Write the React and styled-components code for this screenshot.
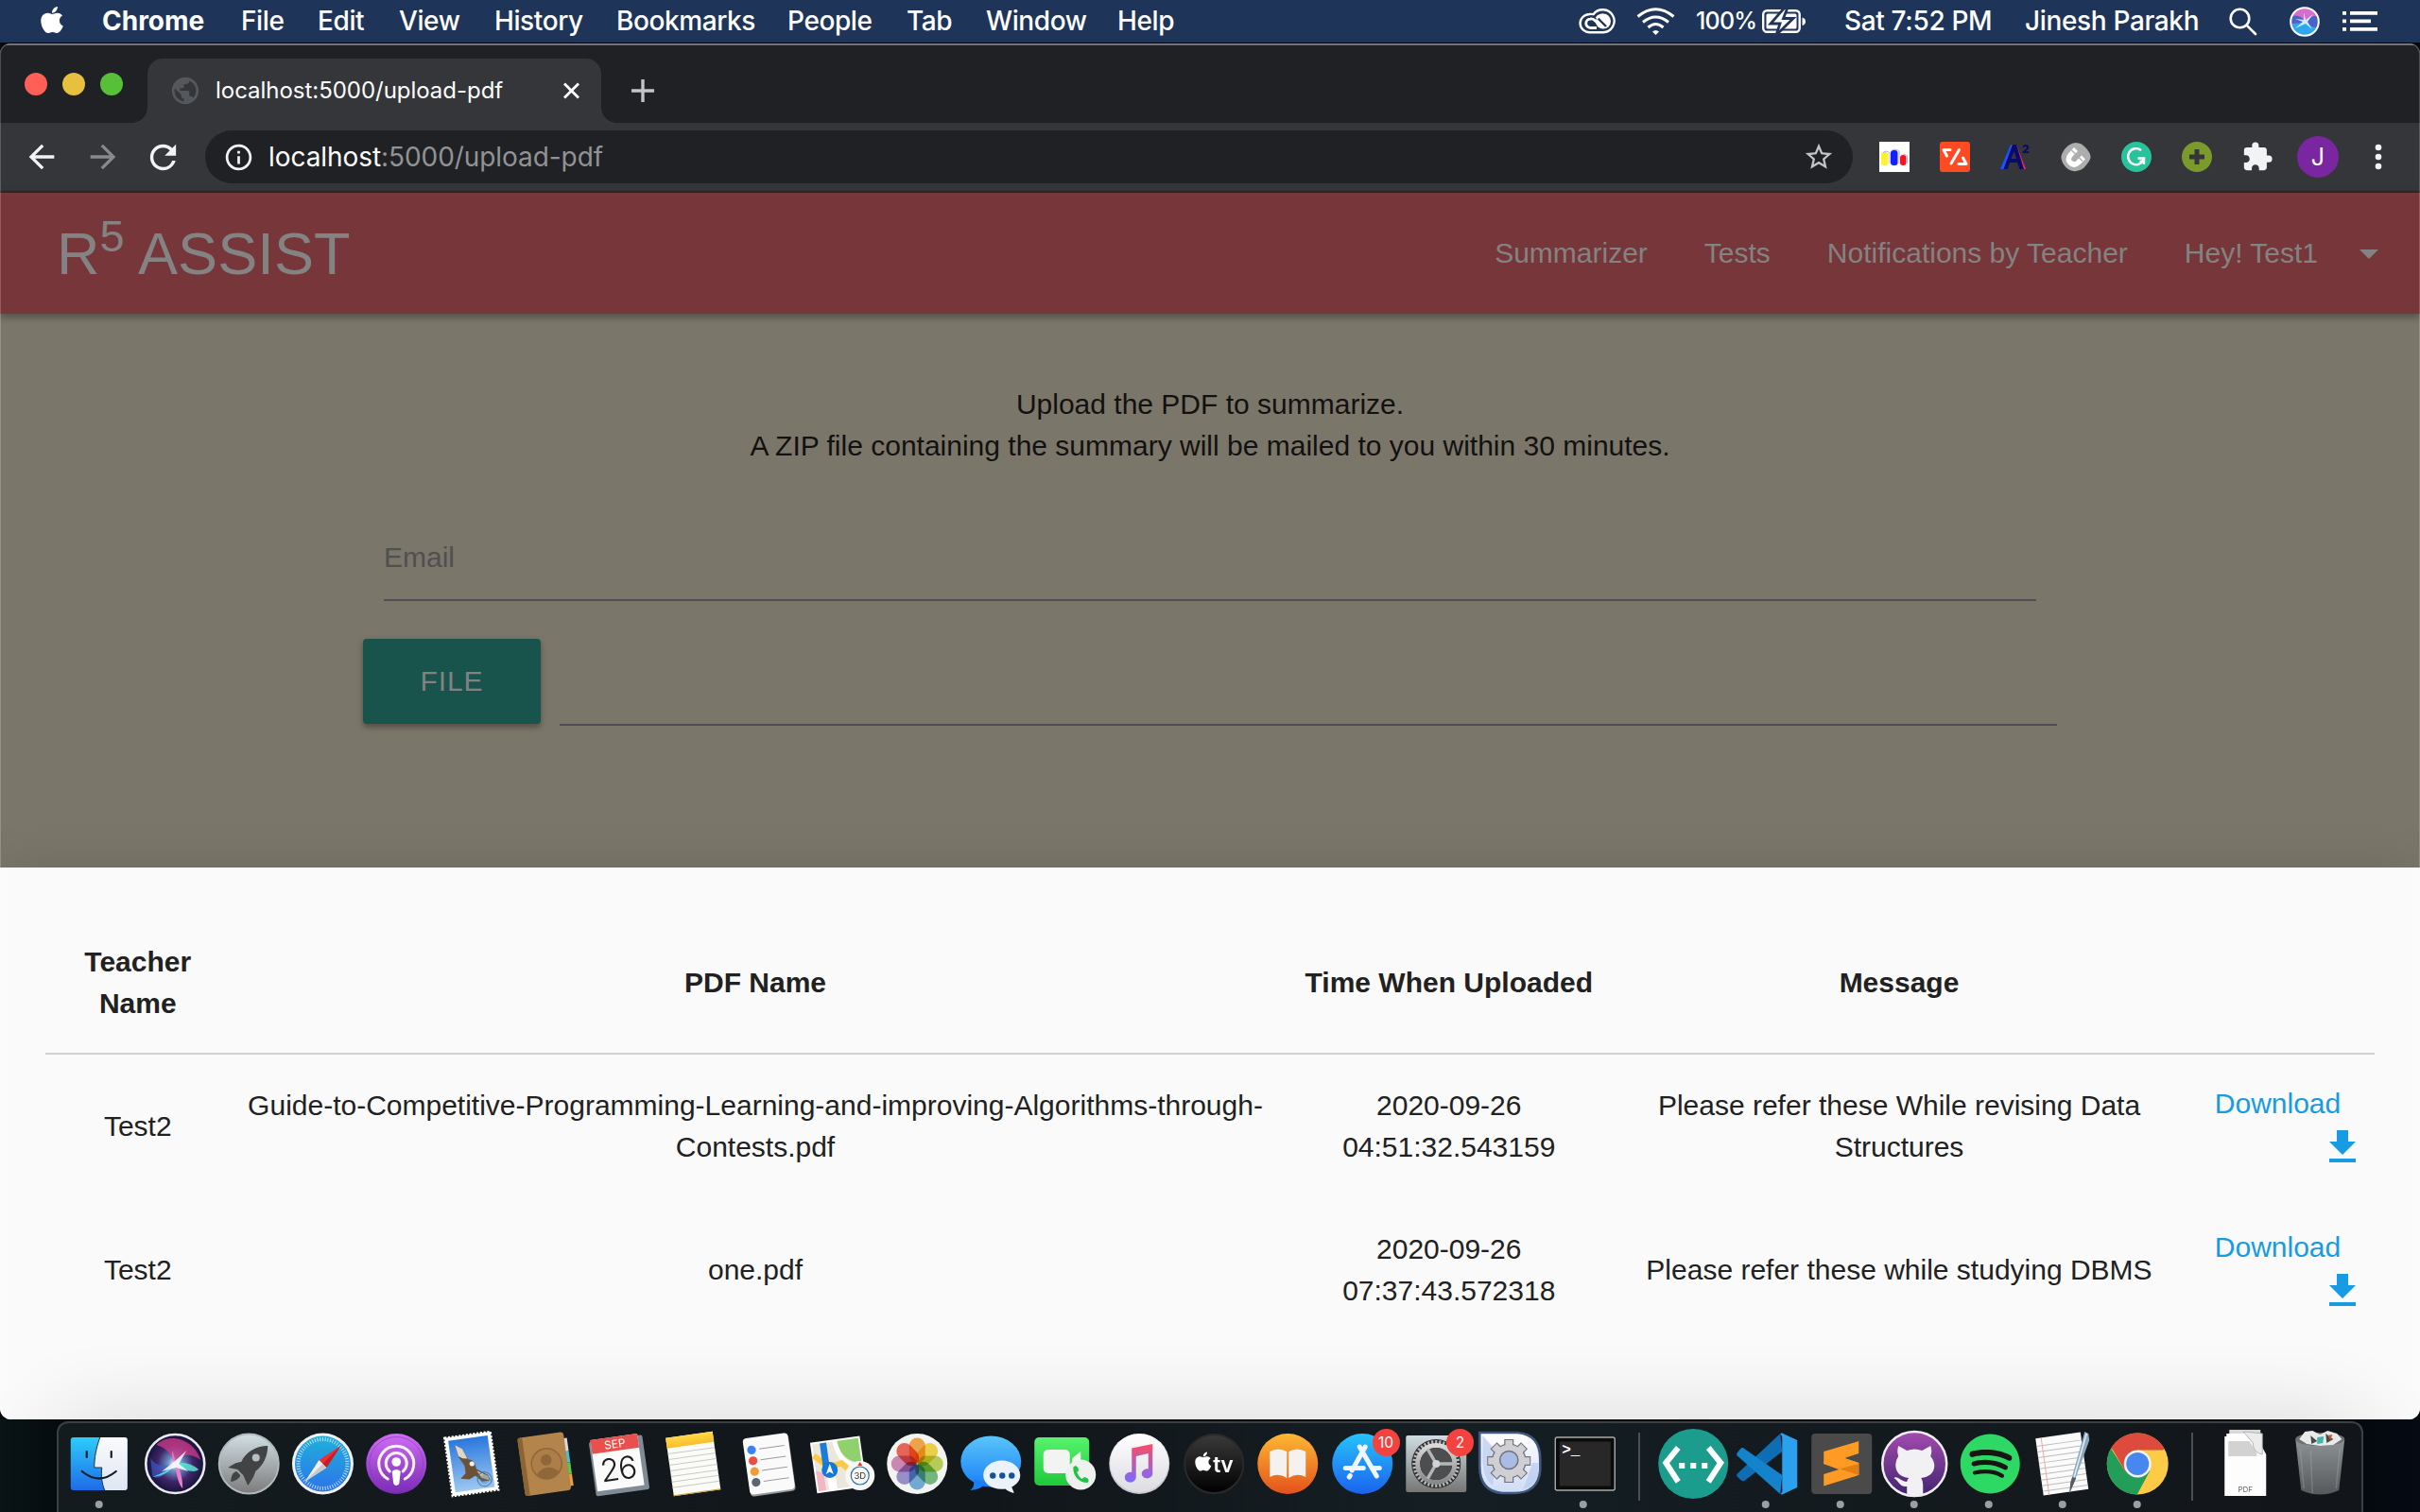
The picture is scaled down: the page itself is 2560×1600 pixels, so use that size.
import React from "react";
import styled, { createGlobalStyle } from "styled-components";
import { FaApple, FaSpotify } from "react-icons/fa";
import { MdArrowBack, MdArrowForward, MdRefresh, MdInfoOutline, MdStarBorder, MdExtension, MdPublic, MdArrowDropDown } from "react-icons/md";

const ui = `Inter, "Liberation Sans", sans-serif`;
const page = `"Liberation Sans", Arial, sans-serif`;

const Global = createGlobalStyle`
  *, *::before, *::after { box-sizing: border-box; }
  html, body { margin: 0; background: #000; }
  body { width: 2560px; height: 1600px; overflow: hidden; font-family: ${page}; }
  svg { display: block; flex: none; }
`;

const Desktop = styled.div`
  width: 2560px;
  height: 1600px;
  display: flex;
  flex-direction: column;
  background: #05090c;
  overflow: hidden;
`;

/* ---------- menu bar ---------- */
const MenuBar = styled.header`
  height: 45px;
  flex: none;
  display: flex;
  justify-content: space-between;
  background: #1f3459;
  color: #fff;
  font: 500 28px/45px ${ui};
`;
const MenuLeft = styled.nav`
  display: grid;
  grid-template-columns: 69px 147px 81px 86px 101px 129px 181px 126px 84px 139px 100px;
  padding-left: 39px;
  align-items: center;
`;
const MenuRight = styled.div`
  display: grid;
  grid-template-columns: 61px 63px 70px 87px 191px 216px 64px 56px 82px;
  align-items: center;
`;
const AppleMark = styled(FaApple)`
  width: 32px;
  height: 32px;
  margin-top: -4px;
`;
const MenuItem = styled.span`
  white-space: nowrap;
  font-weight: ${(p) => (p.$bold ? 700 : 500)};
  letter-spacing: ${(p) => p.$track || 0}px;
  font-size: ${(p) => p.$size || 28}px;
`;

/* ---------- browser window ---------- */
const Window = styled.main`
  position: relative;
  height: 1457px;
  flex: none;
  display: flex;
  flex-direction: column;
  border-top: 1px solid #000;
  border-radius: 12px;
  overflow: hidden;
  background: #fafafa;
  &::after {
    content: "";
    position: absolute;
    inset: 0;
    border-radius: 11px;
    box-shadow: inset 0 0 0 1px rgba(255, 255, 255, 0.2);
    pointer-events: none;
  }
`;
const TabStrip = styled.div`
  height: 84px;
  flex: none;
  display: flex;
  background: #202124;
  border-top: 2px solid #66686a;
  padding-left: 26px;
`;
const Lights = styled.div`
  width: 130px;
  display: flex;
  align-items: center;
  gap: 16px;
`;
const Light = styled.i`
  width: 24px;
  height: 24px;
  border-radius: 50%;
  background: ${(p) => p.$color};
`;
const Tab = styled.div`
  position: relative;
  width: 480px;
  height: 68px;
  align-self: flex-end;
  display: flex;
  align-items: center;
  padding: 0 20px 0 23px;
  border-radius: 16px 16px 0 0;
  background: #35363a;
  color: #fff;
  font: 400 24px/30px ${ui};
  &::before, &::after {
    content: "";
    position: absolute;
    bottom: 0;
    width: 16px;
    height: 16px;
  }
  &::before { left: -16px; background: radial-gradient(circle at 0 0, transparent 15.5px, #35363a 16px); }
  &::after { right: -16px; background: radial-gradient(circle at 100% 0, transparent 15.5px, #35363a 16px); }
`;
const TabTitle = styled.span`
  flex: 1;
  margin-left: 15px;
  letter-spacing: -0.03px;
`;
const NewTab = styled.div`
  margin: 14px 0 0 31px;
  height: 68px;
  display: flex;
  align-items: center;
`;
const Toolbar = styled.div`
  height: 74px;
  flex: none;
  display: grid;
  grid-template-columns: 217px 1743px 1fr;
  align-items: center;
  background: #35363a;
  border-bottom: 2px solid #28292b;
  color: #f1f3f4;
`;
const NavButtons = styled.div`
  display: grid;
  grid-template-columns: 65px 65px 62px;
  justify-items: center;
  padding-left: 11px;
`;
const Omnibox = styled.div`
  height: 56px;
  display: flex;
  align-items: center;
  padding: 0 19px;
  border-radius: 28px;
  background: #202124;
  font: 400 28px/40px ${ui};
`;
const Url = styled.span`
  flex: 1;
  margin-left: 15px;
  color: #919395;
  letter-spacing: -0.07px;
  b { font-weight: 400; color: #fff; }
`;
const Extensions = styled.div`
  display: grid;
  grid-template-columns: repeat(9, 64px);
  justify-items: center;
  align-items: center;
  padding-left: 12px;
`;
const Avatar = styled.span`
  width: 44px;
  height: 44px;
  border-radius: 50%;
  background: #7a26a0;
  color: #fff;
  text-align: center;
  font: 400 25px/44px ${ui};
`;

/* ---------- site ---------- */
const NavBar = styled.nav`
  position: relative;
  height: 128px;
  flex: none;
  display: flex;
  justify-content: space-between;
  align-items: center;
  padding: 0 36px 0 60px;
  background: #773639;
  color: #838383;
  box-shadow: 0 4px 6px rgba(0, 0, 0, 0.22), 0 2px 10px rgba(0, 0, 0, 0.12);
`;
const Brand = styled.a`
  font-size: 63px;
  line-height: 127px;
  letter-spacing: 0.1px;
  white-space: pre;
  sup {
    position: relative;
    top: -24px;
    font-size: 47px;
    line-height: 0;
    vertical-align: baseline;
  }
`;
const Links = styled.div`
  display: flex;
  align-items: center;
  font-size: 30px;
`;
const Link = styled.a`
  padding: 0 30px;
`;
const Caret = styled(MdArrowDropDown)`
  margin-right: -6px;
  width: 48px;
  height: 48px;
`;
const UploadArea = styled.section`
  height: 586px;
  flex: none;
  padding-top: 74px;
  background: #7b766a;
  color: #121110;
  font-size: 30px;
  line-height: 44px;
`;
const Intro = styled.p`
  margin: 0;
  text-align: center;
`;
const Form = styled.form`
  width: 1792px;
  margin: 74px auto 0;
`;
const EmailField = styled.div`
  margin: 0 22px;
  height: 68px;
  color: #504f51;
  border-bottom: 2px solid #504e53;
`;
const FileRow = styled.div`
  display: flex;
  gap: 20px;
  height: 92px;
  margin-top: 40px;
`;
const FileButton = styled.span`
  width: 188px;
  height: 90px;
  border-radius: 4px;
  background: #18534c;
  color: #828282;
  text-align: center;
  line-height: 90px;
  letter-spacing: 0.9px;
  box-shadow: 0 4px 5px rgba(0, 0, 0, 0.22), 0 2px 8px rgba(0, 0, 0, 0.14);
`;
const FilePath = styled.div`
  flex: 1;
  border-bottom: 2px solid #504e53;
`;

/* ---------- modal table ---------- */
const Modal = styled.section`
  position: relative;
  flex: 1;
  padding: 48px;
  background: #fafafa;
  color: #212121;
  font-size: 30px;
  line-height: 44px;
  box-shadow: 0 0 50px rgba(0, 0, 0, 0.1);
`;
const Row = styled.div`
  display: grid;
  grid-template-columns: 195.500px 1111px 356.500px 596px 204px;
  height: ${(p) => (p.$head ? 150 : 152)}px;
  align-items: center;
  text-align: center;
  font-weight: ${(p) => (p.$head ? 700 : 400)};
  border-bottom: ${(p) => (p.$head ? "2px solid #d1d1d1" : "0")};
`;
const Cell = styled.div`
  padding: 0 10px;
  white-space: pre-line;
`;
const Download = styled.a`
  display: flex;
  flex-direction: column;
  align-items: center;
  padding: 0 9px 0 10px;
  margin-top: -1px;
  color: #179be2;
  svg { align-self: flex-end; }
`;

/* ---------- dock ---------- */
const DockArea = styled.footer`
  position: relative;
  z-index: 1;
  flex: none;
  height: 98px;
  padding: 2px 60px 0;
  background: linear-gradient(90deg, #0a1517, #04070b 4%, #05080d 96%, #060b14);
`;
const Dock = styled.div`
  height: 96px;
  display: flex;
  padding-left: 5px;
  background: linear-gradient(90deg, #141b1e, #11161a 40%, #141e23 60%, #13181c 90%, #121519);
  border: 2px solid #3c4043;
  border-bottom: 0;
  border-radius: 12px 12px 0 0;
  box-shadow: 0 0 90px rgba(0, 0, 0, 0.14);
`;
const Slot = styled.div`
  position: relative;
  width: 78.5px;
  height: 94px;
  flex: none;
`;
const Divider = styled.i`
  width: 2px;
  height: 72px;
  margin: 10px 17px 0;
  background: #4b5054;
`;
const Badge = styled.span`
  position: absolute;
  left: ${(p) => p.$left}px;
  top: 5.5px;
  width: 29px;
  height: 29px;
  border-radius: 50%;
  background: #f4423f;
  color: #fff;
  text-align: center;
  font: 400 15.5px/29px ${ui};
`;

function AppSlot({ children, running, badge, badgeLeft }) {
  return (
    <Slot>
      <svg width="78.5" height="94" viewBox="-39.25 -43 78.5 94" overflow="visible">
        {children}
        {running && <circle cx="-1.500" cy="43" r="4" fill="#9a9fa4" />}
      </svg>
      {badge && <Badge $left={badgeLeft}>{badge}</Badge>}
    </Slot>
  );
}

const HiddenDefs = styled.svg`
  position: absolute;
`;

const Defs = () => (
  <HiddenDefs width="0" height="0">
    <defs>
      {[
        ["finderL", "#2ccdfb", "#1f6be8"], ["finderR", "#fbfbfd", "#dde6f2"], ["rocket", "#d2dfe4", "#7c7c7c"],
        ["pod", "#cf6df5", "#7a2bb4"], ["sky", "#2a78dc", "#9cc8f2"], ["note", "#ffd84a", "#f9bf26"],
        ["msg", "#5ac5fa", "#1a80f6"], ["ft", "#57f36c", "#1fc93b"], ["book", "#fdb833", "#e4521b"],
        ["store", "#26c3fb", "#1b62ee"], ["white", "#ffffff", "#dcdce2"], ["tv", "#3a3a3a", "#000000"],
        ["prefs", "#cfdde2", "#767676"], ["gh", "#a34bb0", "#41256f"], ["trash", "#8d9295", "#55595c"],
        ["music", "#fb4c64", "#7a6bff"], ["saf", "#1fb0dc", "#2c74e8"], ["gearblue", "#ffffff", "#cfdcf5"], ["steel", "#dadada", "#86888a"],
      ].map(([id, a, b]) => (
        <linearGradient key={id} id={id} x1="0" y1="0" x2="0" y2="1">
          <stop offset="0" stopColor={a} />
          <stop offset="1" stopColor={b} />
        </linearGradient>
      ))}
      <radialGradient id="siri" cx="0.5" cy="0.5" r="0.5">
        <stop offset="0" stopColor="#e8f6ff" />
        <stop offset="0.25" stopColor="#6a8fc8" />
        <stop offset="0.6" stopColor="#3f2668" />
        <stop offset="1" stopColor="#141238" />
      </radialGradient>
    </defs>
  </HiddenDefs>
);

const teeth = (n, r1, r2) =>
  Array.from({ length: n }, (_, i) => {
    const a = (i * 2 * Math.PI) / n;
    return `M${(Math.cos(a) * r1).toFixed(2)} ${(Math.sin(a) * r1).toFixed(2)}L${(Math.cos(a) * r2).toFixed(2)} ${(Math.sin(a) * r2).toFixed(2)}`;
  }).join("");

const Finder = () => (
  <g transform="translate(-1.5 0)">
    <rect x="-30" y="-28" width="60" height="56" rx="3" fill="url(#finderL)" />
    <path d="M1-28C-3-17-5-6-5 4H3C2 13 3 21 6 28H27a3 3 0 0 0 3-3V-25a3 3 0 0 0-3-3Z" fill="url(#finderR)" />
    <path d="M1-28C-3-17-5-6-5 4H3C2 13 3 21 6 28" fill="none" stroke="#1d3350" strokeWidth="1" />
    <path d="M-13-13v6M13-13v6M-18 8Q0 23 18 8" fill="none" stroke="#111f2b" strokeWidth="2.2" strokeLinecap="round" />
  </g>
);
const Siri = () => (
  <g>
    <circle r="31" fill="url(#siri)" stroke="#e9eaf2" strokeWidth="2.6" />
    <path d="M-20-20C-6-34 20-26 27-4C14-14 4-8 0-1C-4-12-12-18-20-20Z" fill="#d23b88" opacity="0.75" />
    <path d="M-26-6C-20 4-8 3 0 0C-10 12-18 18-24 13Z" fill="#3f63d6" opacity="0.6" />
    <path d="M-24 14Q-8 8 0 0Q12-4 25 6Q18 12 0 0Q-6 12-24 14Z" fill="#57e6d6" opacity="0.85" />
    <path d="M-3-14Q0-4 2 0Q8 12 8 26Q3 22 0 2Q-4-6-3-14Z" fill="#f07ac8" />
    <path d="M-14 8L1-4L12-14L4 0L14 8L1 4Z" fill="#fff" opacity="0.85" />
  </g>
);
const Launchpad = () => (
  <g>
    <circle r="31.5" fill="url(#rocket)" stroke="#aebabf" strokeWidth="2" />
    <path d="M20-19C8-19-3-13-8-2C-13-2-19 2-22 4L-12 6L-6 12L-1 23C4 16 6 12 7 8C15 2 20-8 20-19Z" fill="#414345" />
    <path d="M-13 8C-17 9-19 13-19 19C-14 18-9 15-9 12Z" fill="#414345" />
    <circle cx="7.5" cy="-6.5" r="4" fill="#b6bfc3" />
  </g>
);
const Safari = () => (
  <g transform="translate(-0.8 0)">
    <circle r="32.5" fill="#f2f2f2" />
    <circle r="29.5" fill="url(#saf)" />
    <path d={teeth(60, 24, 28)} stroke="#d9edfb" strokeWidth="0.9" />
    <path d="M19-19L4 4L-4-4Z" fill="#ee2e33" />
    <path d="M-19 19L4 4L-4-4Z" fill="#f1efec" />
    <path d="M19-19L4 4L0 0Z" fill="#c21f26" />
    <path d="M-19 19L4 4L0 0Z" fill="#c9c9c9" />
  </g>
);
const Podcasts = () => (
  <g transform="translate(-1 0)">
    <circle r="32" fill="url(#pod)" />
    <circle r="28.5" fill="none" stroke="#8a35c4" strokeWidth="1" opacity="0.6" />
    <g fill="none" stroke="#fbf3ff" strokeWidth="3" strokeLinecap="round">
      <path d="M-9 16A18.5 18.5 0 1 1 9 16" />
      <path d="M-7 8A11 11 0 1 1 7 8" />
    </g>
    <circle cy="-2" r="4.8" fill="#fff" />
    <path d="M-4.5 8Q0 4 4.5 8L3 21Q0 25-3 21Z" fill="#fff" />
  </g>
);
const Mail = () => (
  <g transform="rotate(-8)">
    <rect x="-25" y="-31" width="49" height="62" fill="#fff" stroke="#fff" strokeWidth="2.4" strokeDasharray="2.2 1.6" />
    <rect x="-21.5" y="-27.5" width="42" height="55" fill="url(#sky)" />
    <path d="M-15-22L-8-17L-3-5Q1-5 3 0L4 6L15 14L17 20L8 20L2 13L-5 16L-14 14L-8 9L-8 1L-13-9Z" fill="#6b5139" />
    <path d="M-15-22L-8-17L-4-6L-9-7L-13-10Z" fill="#ddd6ca" />
    <path d="M4 8L15 15L16 20L8 16Z" fill="#d3c29c" />
    <circle cx="0" cy="0" r="2.6" fill="#f2efe8" />
    <circle cx="11" cy="18" r="7.5" fill="none" stroke="#4778a8" strokeWidth="1" />
    <circle cx="11" cy="18" r="5" fill="#4778a8" opacity="0.35" />
  </g>
);
const Contacts = () => (
  <g transform="rotate(-8)">
    <rect x="17" y="-24" width="9" height="14" fill="#d8dad8" />
    <rect x="17" y="-10" width="9" height="12" fill="#49c2cf" />
    <rect x="17" y="2" width="9" height="12" fill="#55c950" />
    <rect x="17" y="14" width="9" height="13" fill="#efa12e" />
    <rect x="-26" y="-31" width="49" height="62" rx="3" fill="#b3854d" />
    <path d="M-26-29v58a2 2 0 0 0 2 2h3v-62h-3a2 2 0 0 0-2 2Z" fill="#8a6434" />
    <circle cx="1" r="16" fill="#ad7f48" stroke="#8f673a" strokeWidth="1.5" />
    <circle cx="1" cy="-4" r="5.8" fill="#8f673a" />
    <path d="M-11 10Q1-2 13 10Q1 22-11 10Z" fill="#8f673a" />
  </g>
);
const Calendar = () => (
  <g transform="translate(-2 0) rotate(-8)">
    <rect x="-28" y="-27" width="57" height="58" rx="2" fill="#7f8c96" />
    <rect x="-26" y="-29" width="50" height="55" fill="#fbfbfb" />
    <rect x="-26" y="-29" width="50" height="15" fill="#e9504d" />
    <text x="-1" y="-17" textAnchor="middle" fill="#fff" fontFamily="Inter" fontSize="12">SEP</text>
    <text x="-1" y="17" textAnchor="middle" fill="#1c1c1c" fontFamily="Inter" fontWeight="300" fontSize="33" letterSpacing="-1">26</text>
  </g>
);
const Notes = () => (
  <g transform="translate(-1 0) rotate(-8)">
    <rect x="-25" y="-31" width="50" height="62" fill="#fbfbf8" />
    <rect x="-25" y="-31" width="50" height="11" fill="url(#note)" />
    <path d="M-25-14h50M-25-8h50M-25-2h50M-25 4h50M-25 10h50M-25 16h50M-25 22h50" stroke="#c9cac8" strokeWidth="1" />
    <path d="M-25 30.5h50" stroke="#c89a2a" strokeWidth="1" />
  </g>
);
const Reminders = () => (
  <g transform="rotate(-8)">
    <rect x="-23.5" y="-29" width="48" height="61" rx="4" fill="#9a9a9a" />
    <rect x="-24" y="-30" width="48" height="60" rx="4" fill="#fafafa" />
    {["#3b82f6", "#ee4d43", "#f29a38", "#5b6470"].map((c, i) => (
      <g key={c}>
        <circle cx="-16" cy={-17 + i * 11.5} r="4.6" fill={c} />
        <path d={`M-8 ${-17 + i * 11.5}h27`} stroke="#9b9b9b" strokeWidth="1" />
      </g>
    ))}
  </g>
);
const Maps = () => (
  <g>
    <g transform="translate(-5 0) rotate(-8)">
      <rect x="-26" y="-26" width="53" height="54" fill="#fff" />
      <rect x="-24" y="-24" width="49" height="50" fill="#ece7dc" />
      <path d="M2-24H25V2C10 0 4-10 2-24Z" fill="#8fd16c" />
      <path d="M0-24Q2 4 25 6" fill="none" stroke="#fff" strokeWidth="5" />
      <path d="M-24-12L-10 2L4 0L20 18" fill="none" stroke="#fbc943" strokeWidth="6" />
      <path d="M-16-24h7v30h-7Z" fill="#1c7cd8" />
      <path d="M-24 4l8 4v18h-8Z" fill="#f5b6c4" />
      <path d="M-13 12h9v14h-9Z" fill="#fff" />
    </g>
    <circle cx="-13.5" cy="6.5" r="8.5" fill="#1577d8" />
    <path d="M-13.5 0L-9.5 11L-13.5 8.5L-17.5 11Z" fill="#fff" />
    <circle cx="18.5" cy="12.5" r="15.5" fill="#f7f7f6" />
    <circle cx="18.5" cy="12.5" r="9.5" fill="none" stroke="#2f6d94" strokeWidth="1.2" />
    <path d="M18.5-2l2.5 4h-5Z" fill="#e13a32" />
    <text x="18.5" y="16" textAnchor="middle" fontFamily="Inter" fontSize="9.5" fill="#333">3D</text>
  </g>
);
const Multiply = styled.g`
  rect { mix-blend-mode: multiply; }
`;
const Photos = () => (
  <Multiply>
    <circle r="32" fill="#f3f3f2" />
    {["#f9a23a", "#f4d63a", "#b7d24b", "#6cb878", "#67a9dc", "#9689cf", "#cf82b4", "#ef5b4c"].map((c, i) => (
      <rect key={c} x="-8.5" y="-27.5" width="17" height="27" rx="8.5" fill={c} opacity="0.9" transform={`rotate(${i * 45})`} />
    ))}
  </Multiply>
);
const Messages = () => (
  <g>
    <ellipse cy="-2.5" rx="32" ry="27" fill="url(#msg)" />
    <path d="M-18 16Q-17 25-22 28Q-10 27-4 20Z" fill="#1a80f6" />
    <path d="M11.5-3.5C22-3.5 31 3 31 12C31 18 27 22 22 24.5C23 28 25 30 24 31C20 30 17 28 15 26.5C1 28-8 21-8 12C-8 3 1-3.5 11.5-3.5Z" fill="#eaf3fb" />
    <circle cx="2" cy="12.5" r="3.2" fill="#15529c" /><circle cx="12" cy="12.5" r="3.2" fill="#15529c" /><circle cx="22" cy="12.5" r="3.2" fill="#15529c" />
  </g>
);
const FaceTime = () => (
  <g>
    <rect x="-33" y="-28" width="58" height="51" rx="5" fill="url(#ft)" />
    <rect x="-23.5" y="-15" width="28" height="25" rx="5" fill="#f1f4f1" />
    <path d="M7-6L16-13V6L7 0Z" fill="#f1f4f1" />
    <circle cx="16" cy="11.5" r="16" fill="#eff1ee" />
    <path d="M8 4C8 14 15 20 23 20C26 18 24 15 20 14L17 16C15 14 13 12 12 9L14 7C13 2 10 1 8 4Z" fill="#20c443" />
  </g>
);
const Music = () => (
  <g>
    <circle r="32" fill="#c8c9cd" />
    <circle r="31" cy="-0.8" fill="url(#white)" />
    <path d="M-8-16.5L14-21V11A5.8 5 0 1 1 9.5 5.5V-11L-3.5-8V14A6 5.4 0 1 1-8 9Z" fill="url(#music)" />
  </g>
);
const AppleTv = () => (
  <g>
    <circle r="31" fill="url(#tv)" stroke="#2a2a2a" strokeWidth="2" />
    <g transform="translate(-23 -14)"><FaApple size={23} color="#fff" /></g>
    <text x="-1" y="8.5" fill="#fff" fontFamily="Inter" fontWeight="600" fontSize="23" letterSpacing="-0.5">tv</text>
  </g>
);
const Books = () => (
  <g>
    <circle r="32" fill="url(#book)" />
    <path d="M-19-13Q-10-18-1-13V15Q-10 9-19 14ZM19-13Q10-18 1-13V15Q10 9 19 14Z" fill="#f4f1ee" />
  </g>
);
const AppStore = () => (
  <g>
    <circle r="32" fill="url(#store)" />
    <g stroke="#f2f6fb" strokeWidth="5" strokeLinecap="round">
      <path d="M3-18L-11 7M-13 12.5L-14 14M-3-18L15 13M-18 4.5H1M10 4.5H18" />
    </g>
  </g>
);
const Preferences = () => (
  <g>
    <rect x="-32" y="-30" width="64" height="60" rx="2" fill="url(#prefs)" />
    <circle r="26" fill="#2e3032" />
    <path d={teeth(36, 20, 25)} stroke="#b9b9b9" strokeWidth="2.2" />
    <circle r="19.5" fill="none" stroke="url(#steel)" strokeWidth="5" />
    <circle r="17" fill="#4c4e50" />
    <path d="M0 0L18 0M0 0L-9-15.6M0 0L-9 15.6" stroke="#b4b6b7" strokeWidth="3.4" />
    <circle r="4" fill="#d2d3d4" />
  </g>
);
const GearTool = () => (
  <g transform="translate(-1 -1)">
    <path d="M-32-32H8Q32-30 32-4V8Q30 32 4 32H-8Q-32 30-32 4Z" fill="url(#gearblue)" stroke="#3f587f" strokeWidth="2.6" />
    <path d="M-29-29L-14-12L-18 24Q-28 16-29 0ZM24 0H30V10Q28 24 14 28Z" fill="#b9cbee" opacity="0.7" />
    <g transform="translate(-1 -2)">
      <path d={teeth(8, 14, 23)} stroke="#74727e" strokeWidth="10" />
      <circle r="18.5" fill="#74727e" />
      <path d={teeth(8, 14, 22)} stroke="#cfcfd4" strokeWidth="7.6" />
      <circle r="17.2" fill="#cfcfd4" />
      <circle r="9.6" cy="-1" fill="#a8bce6" stroke="#74727e" strokeWidth="1.5" />
    </g>
  </g>
);
const Terminal = () => (
  <g transform="translate(1 0)">
    <rect x="-32" y="-28" width="63" height="56" rx="2" fill="#0b0b0b" stroke="#a7acab" strokeWidth="1.4" />
    <rect x="-27.5" y="-23.5" width="54" height="47" fill="#282828" />
    <text x="-25" y="-10" fill="#fff" fontFamily="Liberation Mono" fontWeight="700" fontSize="16">&gt;_</text>
  </g>
);
const CodeCircle = () => (
  <g>
    <circle r="37" fill="#1b9c8d" />
    <path d="M-16-16L-29 0L-16 20M16-16L29 0L16 20" transform="translate(0 -1)" fill="none" stroke="#fff" strokeWidth="6" />
    <path d="M-15-1h6v6h-6ZM-3-1h6v6h-6ZM9-1h6v6h-6Z" fill="#fff" />
  </g>
);
const VsCode = () => (
  <g>
    <path d="M-32 11L14-32L16-13L-24 18Q-26 19-28 17L-32 13Z" fill="#0f6db3" />
    <path d="M-32-11L-28-16Q-26-18-24-16L16 12L14 32L-32-9Z" fill="#1583cb" />
    <path d="M14-32Q16-33 18-31.5L32-25V25L18 31.5Q16 33 14 32Q17 30 16 26V-26Q16-30 14-32Z" fill="#2ba0ef" />
  </g>
);
const Sublime = () => (
  <g>
    <rect x="-32" y="-32" width="64" height="64" rx="4" fill="#4a4a4a" />
    <path d="M-19-13L18-24V-11L3-6L18-1V12L-19 23.5V11L-3 6L-19 0Z" fill="#ff9a24" />
    <path d="M-3-8L18-1V12L-19 0V-3Z" fill="#ff9a24" />
    <path d="M18 0V12L-2 5.5Z" fill="#e37f12" />
  </g>
);
const GitHub = () => (
  <g transform="translate(-1 0)">
    <circle r="34" fill="url(#gh)" stroke="#f1eef4" strokeWidth="2.5" />
    <path d="M-17-19L-8-14Q0-17 8-14L17-19Q19-13 17-8Q21-3 21 2C21 10 15 14 7 15Q9 18 9 22V32Q0 35-8 32V24C-16 25-17 17-22 15C-18 12-14 19-8 19Q-8 17-6 15C-15 14-20 9-20 1Q-20-4-17-8Q-19-13-17-19Z" fill="#f1f0f2" />
  </g>
);
const Spotify = () => (
  <g>
    <circle r="30" fill="#191414" />
    <g transform="translate(-32.5 -32.5)"><FaSpotify size={65} color="#2dd865" /></g>
  </g>
);
const TextEdit = () => (
  <g>
    <g transform="translate(-2 0) rotate(-8)">
      <rect x="-24" y="-30.5" width="48" height="61" fill="#fbfbfb" />
      <path d="M-24-22h48M-24-16h48M-24-10h48M-24-4h48M-24 2h48M-24 8h48M-24 14h48M-24 20h48M-24 26h48" stroke="#bcbcbc" strokeWidth="1" />
      <path d="M-18-30v61" stroke="#eca9a4" strokeWidth="1" />
    </g>
    <path d="M22-34L26-32L27-25L10 22L6 31L7 20Z" fill="#8ba9bf" />
    <path d="M24-32L8 24" stroke="#e2edf5" strokeWidth="1.5" />
    <path d="M9 14L13 15L10 22L6 31L7 20Z" fill="#555c62" />
  </g>
);
const Chrome = () => (
  <g transform="translate(-1 0)">
    <circle r="32.5" fill="#fdcb45" />
    <path d="M0 0L-28.2-16.2A32.5 32.5 0 0 1 28.2-16.2L27-14.5H0Z" fill="#dc4b3e" />
    <path d="M0 0L13 7.5L-0.5 32.5A32.5 32.5 0 0 1-28.2-16.2L-13 8Z" fill="#239e5a" />
    <path d="M-27.5-17L-13 8L0 0Z" fill="#dc4b3e" />
    <circle r="14.5" fill="#f4f4f4" />
    <circle r="12" fill="#4787f0" />
  </g>
);
const PdfStack = () => (
  <g transform="translate(-1 0)">
    <path d="M-17-36H16V-28H-17Z" fill="#d8d8d8" />
    <path d="M-20-32H10L22-10V34H-22V-29H-20Z" fill="#fdfdfd" />
    <path d="M-18-24H4L12-12V-8H-18Z" fill="#d2d2d2" />
    <path d="M-2-34L18-32V-10Q8-12 8-22Z" fill="#ececec" stroke="#a9a9a9" strokeWidth="0.8" />
    <text y="30" textAnchor="middle" fontFamily="Inter" fontSize="8" fill="#6a6a6a">PDF</text>
  </g>
);
const Trash = () => (
  <g transform="translate(-1 0)">
    <path d="M-26-26L-20 28Q0 37 20 28L26-26Q0-14-26-26Z" fill="url(#trash)" />
    <ellipse cy="-26" rx="26" ry="7" fill="#6d7073" />
    <path d="M-22-26L-16-34L-8-35L0-31L8-35L18-32L23-26L14-20L0-19L-14-21Z" fill="#e9e9e7" />
    <path d="M-10-30L-3-24L-9-21ZM6-32L14-26L7-22Z" fill="#4a4a4a" />
    <path d="M-3-28L4-29L3-22L-3-21Z" fill="#3fb6a8" />
    <path d="M8-30L13-31L11-25Z" fill="#c8553d" />
    <path d="M-21-16L-17 26M-10-14L-8 31M21-16L17 26" stroke="#a5a9ac" strokeWidth="1.5" opacity="0.35" />
  </g>
);

const DOCK = [
  [[Finder, true], [Siri], [Launchpad], [Safari], [Podcasts], [Mail], [Contacts], [Calendar], [Notes], [Reminders], [Maps],
    [Photos], [Messages], [FaceTime], [Music], [AppleTv], [Books], [AppStore, false, "10", 50], [Preferences, false, "2", 50], [GearTool], [Terminal, true]],
  [[CodeCircle], [VsCode, true], [Sublime, true], [GitHub, true], [Spotify, true], [TextEdit, true], [Chrome, true]],
  [[PdfStack], [Trash]],
];

/* ---------- small drawings ---------- */
const CreativeCloud = () => (
  <svg width="39" height="28" viewBox="0 0 39 28" fill="none">
    <path d="M12 25.2A10.2 9.6 0 0 1 11.5 6Q13.5 5.7 15.5 6.2A12.2 12 0 1 1 26 25.2Z" stroke="#fff" strokeWidth="2.4" />
    <circle cx="26" cy="13.5" r="8" fill="#fff" />
    <path d="M17 7L29 19" stroke="#1f3459" strokeWidth="2.4" />
    <path d="M19 20.5H12.5A4.7 4.7 0 0 1 12.5 11Q15.5 10.6 17.5 13L24.5 19.5" stroke="#fff" strokeWidth="2.8" />
    <path d="M19 10.5Q21 7 26 7" stroke="#fff" strokeWidth="2.8" />
  </svg>
);
const Wifi = () => (
  <svg width="41" height="29" viewBox="0 0 41 29" fill="none" stroke="#fff" strokeWidth="3">
    <path d="M1.5 9.5Q20.5-6 39.5 9.5M7 15.5Q20.5 4.5 34 15.5M12.5 21Q20.5 14 28.5 21" />
    <path d="M17 25.5Q20.5 22.5 24 25.5L20.5 29Z" fill="#fff" stroke="none" />
  </svg>
);
const Battery = () => (
  <svg width="46" height="25" viewBox="0 0 46 25" fill="none">
    <rect x="1.2" y="1.2" width="38.5" height="22.5" rx="4" stroke="#fff" strokeWidth="2.4" />
    <rect x="4.5" y="4.5" width="32" height="16" rx="1.5" fill="#fff" />
    <path d="M42.5 8.5V17Q46 16 46 12.7Q46 9.5 42.5 8.5Z" fill="#fff" />
    <path d="M24-2L9 15H19L15 27L33 9.5H22.5L27-2Z" fill="#fff" stroke="#1f3459" strokeWidth="2.8" />
  </svg>
);
const Search = () => (
  <svg width="30" height="30" viewBox="0 0 30 30" fill="none" stroke="#fff" strokeWidth="2.6" strokeLinecap="round">
    <circle cx="11.5" cy="11.5" r="9.8" /><path d="M18.8 18.8L28 28" />
  </svg>
);
const SiriMini = () => (
  <svg width="32" height="32" viewBox="-16 -16 32 32">
    <circle r="15" fill="#4a63c8" />
    <path d="M-13-6A14 14 0 0 1 13-6Q3-7 0 0Q-4-8-13-6Z" fill="#d66bd0" />
    <path d="M-14 2Q-6 2 0 0Q6 6 13 6A14 14 0 0 1-13 6Z" fill="#2fa6ee" />
    <path d="M-1-10L1-2L9-8L3 0L8 8L1 2L-10 7L-2 0L-10-3L-1-2Z" fill="#dff8ff" opacity="0.9" />
    <circle r="14.8" fill="none" stroke="#fff" strokeWidth="2" />
  </svg>
);
const ListGlyph = () => (
  <svg width="37" height="21" viewBox="0 0 37 21" fill="#fff">
    <path d="M0 0h4v3.8H0ZM8 0h29v3.8H8ZM0 8.5h4v3.8H0ZM8 8.5h22v3.8H8ZM0 17h4v3.8H0ZM8 17h29v3.8H8Z" />
  </svg>
);

const ExtBars = () => (
  <svg width="32" height="32" viewBox="0 0 32 32">
    <rect width="32" height="32" fill="#fff" />
    <rect x="2" y="11" width="7.5" height="14" rx="3" fill="#fff033" />
    <rect x="12" y="9" width="7.5" height="16" rx="3" fill="#1420ff" />
    <rect x="22" y="14" width="6.5" height="11" rx="3" fill="#f8141c" />
    <path d="M13 9.5Q17 6.5 21 10V23M4 11.5Q8 8.5 11 12V23M23 14.5Q27 12 29.5 15V23" fill="none" stroke="#777acc" strokeWidth="0.6" />
  </svg>
);
const ExtCode = () => (
  <svg width="32" height="32" viewBox="0 0 32 32" fill="none" stroke="#fff" strokeWidth="3" strokeLinecap="round" strokeLinejoin="round">
    <rect width="32" height="32" rx="3" fill="#ff4a22" stroke="none" />
    <path d="M11 8.5H4L7.5 15M20.5 8.5L12 23M24.5 17L28 23.5H20" />
  </svg>
);
const ExtA = () => (
  <svg width="44" height="40" viewBox="-6 -6 44 40">
    <path d="M0 27L11 1H15L5 27Z" fill="#1f53ff" />
    <path d="M14 1H17L27 27H22Z" fill="#f0266d" />
    <path d="M3.5 27L13 1H17L25 27H20.5L18 20H10L7.5 27ZM11.5 16H17L14.5 8Z" fill="#080a6c" fillRule="evenodd" />
    <text x="23" y="9.5" fontFamily="Inter" fontWeight="800" fontSize="12" fill="#080a6c">2</text>
  </svg>
);
const ExtMagnet = () => (
  <svg width="32" height="32" viewBox="0 0 32 32">
    <path d="M16 1Q22 1 27 7Q32 13 31.5 17Q30 22 24 28Q19 32 13 31Q7 30 3 24Q0 19 0.5 15Q2 9 8 4Q12 1 16 1Z" fill="#adadad" />
    <path d="M16 8L10.5 13.5Q6 19 10.5 22.5Q15 26 19 21.5L24 16.5" fill="none" stroke="#fff" strokeWidth="5.5" />
    <path d="M11.5 9L16 13.5M18.5 16L23 20.5" stroke="#adadad" strokeWidth="1.4" />
  </svg>
);
const ExtG = () => (
  <svg width="32" height="32" viewBox="0 0 32 32" fill="none">
    <circle cx="16" cy="16" r="16" fill="#27c39b" />
    <path d="M21 9A8.5 8.5 0 1 0 24 17.5H17.5M24 24V17.5" stroke="#fff" strokeWidth="2.4" />
    <path d="M19.5 20.5H24.5" stroke="#fff" strokeWidth="2" />
  </svg>
);
const ExtPlus = () => (
  <svg width="32" height="32" viewBox="0 0 32 32">
    <circle cx="16" cy="16" r="16" fill="#7a9a2c" />
    <path d="M13.5 8h5v5.5H24v5h-5.5V24h-5v-5.5H8v-5h5.5Z" fill="#35363a" />
  </svg>
);

const rows = [
  ["Test2", "Guide-to-Competitive-Programming-Learning-and-improving-Algorithms-through-\nContests.pdf", "2020-09-26\n04:51:32.543159", "Please refer these While revising Data\nStructures"],
  ["Test2", "one.pdf", "2020-09-26\n07:37:43.572318", "Please refer these while studying DBMS"],
];

export default function App() {
  return (
    <Desktop>
      <Global />
      <Defs />
      <MenuBar>
        <MenuLeft>
          <AppleMark />
          <MenuItem $bold>Chrome</MenuItem>
          {["File", "Edit", "View", "History", "Bookmarks", "People", "Tab", "Window", "Help"].map((m) => (
            <MenuItem key={m} $track={-0.4}>{m}</MenuItem>
          ))}
        </MenuLeft>
        <MenuRight>
          <CreativeCloud />
          <Wifi />
          <MenuItem $size={25} $track={-0.8}>100%</MenuItem>
          <Battery />
          <MenuItem $track={-0.35}>Sat 7:52 PM</MenuItem>
          <MenuItem $track={-0.35}>Jinesh Parakh</MenuItem>
          <Search />
          <SiriMini />
          <ListGlyph />
        </MenuRight>
      </MenuBar>

      <Window>
        <TabStrip>
          <Lights>
            <Light $color="#ff5f57" />
            <Light $color="#e6c03e" />
            <Light $color="#57c038" />
          </Lights>
          <Tab>
            <MdPublic size={34} color="#54575b" />
            <TabTitle>localhost:5000/upload-pdf</TabTitle>
            <svg width="23" height="18" viewBox="0 0 18 18" stroke="#fff" strokeWidth="2.8"><path d="M1.5 1.5L16.5 16.5M16.5 1.5L1.5 16.5" /></svg>
          </Tab>
          <NewTab>
            <svg width="26" height="26" viewBox="0 0 26 26" stroke="#c3c4c6" strokeWidth="3.4"><path d="M13 1V25M1 13H25" /></svg>
          </NewTab>
        </TabStrip>
        <Toolbar>
          <NavButtons>
            <MdArrowBack size={40} />
            <MdArrowForward size={40} color="#88898c" />
            <MdRefresh size={41} />
          </NavButtons>
          <Omnibox>
            <MdInfoOutline size={33} />
            <Url><b>localhost</b>:5000/upload-pdf</Url>
            <MdStarBorder size={34} color="#c2c4c6" />
          </Omnibox>
          <Extensions>
            <ExtBars /><ExtCode /><ExtA /><ExtMagnet /><ExtG /><ExtPlus />
            <MdExtension size={34} />
            <Avatar>J</Avatar>
            <svg width="8" height="28" viewBox="0 0 8 28" fill="#f1f3f4"><circle cx="4" cy="4" r="3.3" /><circle cx="4" cy="14" r="3.3" /><circle cx="4" cy="24" r="3.3" /></svg>
          </Extensions>
        </Toolbar>

        <NavBar>
          <Brand>R<sup>5</sup> ASSIST</Brand>
          <Links>
            <Link>Summarizer</Link>
            <Link>Tests</Link>
            <Link>Notifications by Teacher</Link>
            <Link>Hey! Test1</Link>
            <Caret />
          </Links>
        </NavBar>
        <UploadArea>
          <Intro>Upload the PDF to summarize.<br />A ZIP file containing the summary will be mailed to you within 30 minutes.</Intro>
          <Form>
            <EmailField>Email</EmailField>
            <FileRow>
              <FileButton>FILE</FileButton>
              <FilePath />
            </FileRow>
          </Form>
        </UploadArea>

        <Modal>
          <Row $head>
            <Cell>{"Teacher\nName"}</Cell>
            <Cell>PDF Name</Cell>
            <Cell>Time When Uploaded</Cell>
            <Cell>Message</Cell>
          </Row>
          {rows.map((r, i) => (
            <Row key={i}>
              {r.map((c, j) => <Cell key={j}>{c}</Cell>)}
              <Download>
                Download
                <svg width="48" height="48" viewBox="0 0 24 24" fill="currentColor"><path d="M19 9h-4V3H9v6H5l7 7 7-7zM5 18v2h14v-2H5z" /></svg>
              </Download>
            </Row>
          ))}
        </Modal>
      </Window>

      <DockArea>
        <Dock>
          {DOCK.map((group, g) => (
            <React.Fragment key={g}>
              {g > 0 && <Divider />}
              {group.map(([Icon, running, badge, left], i) => (
                <AppSlot key={i} running={running} badge={badge} badgeLeft={left}><Icon /></AppSlot>
              ))}
            </React.Fragment>
          ))}
        </Dock>
      </DockArea>
    </Desktop>
  );
}
